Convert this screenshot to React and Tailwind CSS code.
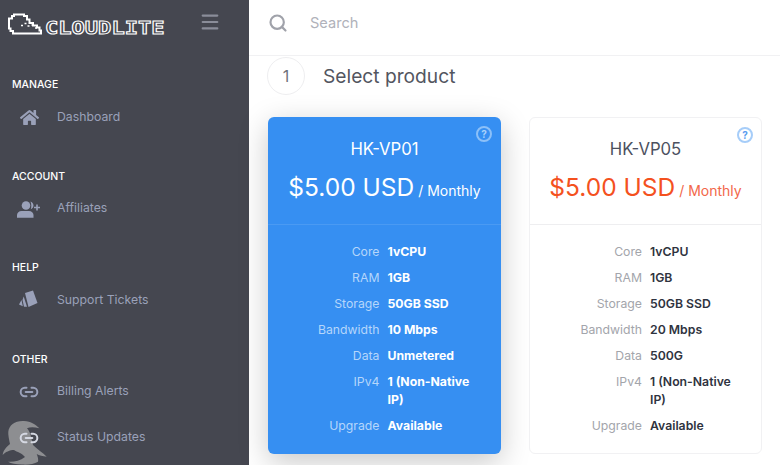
import React from "react";
import { Link2, Menu, Search } from "lucide-react";
import { FaHome } from "react-icons/fa";

const nav = [
  { title: "MANAGE", items: [{ label: "Dashboard", icon: "home" }] },
  { title: "ACCOUNT", items: [{ label: "Affiliates", icon: "users" }] },
  { title: "HELP", items: [{ label: "Support Tickets", icon: "tickets" }] },
  {
    title: "OTHER",
    items: [
      { label: "Billing Alerts", icon: "link" },
      { label: "Status Updates", icon: "link", light: true },
    ],
  },
];

const plans = [
  {
    name: "HK-VP01",
    active: true,
    specs: [
      ["Core", "1vCPU"],
      ["RAM", "1GB"],
      ["Storage", "50GB SSD"],
      ["Bandwidth", "10 Mbps"],
      ["Data", "Unmetered"],
      ["IPv4", "1 (Non-Native IP)"],
      ["Upgrade", "Available"],
    ],
  },
  {
    name: "HK-VP05",
    active: false,
    specs: [
      ["Core", "1vCPU"],
      ["RAM", "1GB"],
      ["Storage", "50GB SSD"],
      ["Bandwidth", "20 Mbps"],
      ["Data", "500G"],
      ["IPv4", "1 (Non-Native IP)"],
      ["Upgrade", "Available"],
    ],
  },
];

function NavIcon({ type }) {
  if (type === "home") return <FaHome className="w-[19px] h-[19px]" />;
  if (type === "link") return <Link2 className="w-5 h-5" strokeWidth={2.4} />;
  if (type === "users") {
    return (
      <svg viewBox="0 0 24 20" className="w-[24px] h-[20px] shrink-0 fill-current">
        <circle cx="9" cy="6.500" r="4.300" />
        <path d="M0 18.800V16C0 14 2 12 4.500 12H12C14.500 12 16.500 14 16.500 16V18.800Z" />
        <path d="M13.500 2.500C15.500 3.500 16.500 5 16.500 6.500C16.500 8 15.500 9.500 13.800 10.300C14.500 8 14.500 5 13.500 2.500Z" />
        <path d="M19.200 5.500H20.800V7.700H23V9.300H20.800V11.500H19.200V9.300H17V7.700H19.200Z" />
      </svg>
    );
  }
  return (
    <svg viewBox="0 0 20 20" className="w-5 h-5 fill-current">
      <path d="M6 3 14 .5 18.500 13 9.500 17Z" />
      <path d="M4.700 6.500 8 16.800 5 16.800 3.500 10Z" />
      <path d="M2.500 10 3.800 16.200 0 14.500Z" />
    </svg>
  );
}

function Sidebar() {
  return (
    <aside className="relative w-[249px] h-[465px] shrink-0 overflow-hidden bg-[#454750]">
      <svg viewBox="0 0 48 46" className="absolute left-0 top-[419px] w-[48px] h-[46px]">
        <path
          fill="#8d8e91"
          d="M8.300 12.700C9 6 15 1.500 24 2C31 2.500 36 5.500 39.300 9.300C34 8 30 8 27 9.300C30 12 31 18 33 26C37 30 43 34 46.700 37.700C43 37 39 36.500 36.700 35C38 38 38.500 41 38 42.700C34 45 28 46 22 45.500C16 45 11 44.500 8 42.700C14 43 20 42 25 38C22 34 17 33 14 31C10 31 5 33 2.700 36C3 32 6 28 10 25C9 20 8 16 8.300 12.700Z"
        />
      </svg>
      <div className="relative flex items-start h-[75px] pl-[7px] pr-[28.5px] pt-[13px]">
        <svg viewBox="0 0 35 24" className="w-[35px] h-[24px] shrink-0" fill="none" stroke="#fff" strokeWidth="2">
          <path d="M6 20.500H34V17.500H32.500V14.500H30V12.500H26V10H22.500V6.500H20V3H17V1.500H7V3H5V5.500H2V15.500H3.500V18H6Z" />
          <path d="M14 12.500h2M17.500 10.500h2M20.500 13h2M24.500 12h2M28 15h2" strokeWidth="1.500" />
        </svg>
        <span className="inline-block origin-left scale-x-[1.26] ml-[3px] mt-[7px] font-['DejaVu_Sans_Mono',monospace] font-bold text-[17.5px] leading-[16px] text-[#454750] [-webkit-text-stroke:1px_#ffffff]">
          CLOUDLITE
        </span>
        <Menu className="ml-auto w-[22px] h-[22px] mt-[-2px] text-[#8a8d99]" strokeWidth={2.3} />
      </div>
      <nav className="relative flex flex-col">
        {nav.map((section) => (
          <div key={section.title} className="mb-[26.5px]">
            <h6 className="pl-3 h-[20px] leading-[20px] text-[10.5px] font-medium text-white">{section.title}</h6>
            <ul className="mt-[-1px]">
              {section.items.map((item) => (
                <li key={item.label} className="flex items-center h-[46px] pl-[19px] text-[#9aa1b9]">
                  <span className={item.light ? "w-[20px] flex justify-center text-[#d5d8e2]" : "w-[20px] flex justify-center"}>
                    <NavIcon type={item.icon} />
                  </span>
                  <span className="ml-[18px] text-[12.25px]">{item.label}</span>
                </li>
              ))}
            </ul>
          </div>
        ))}
      </nav>
    </aside>
  );
}

function PlanCard({ plan }) {
  const { active } = plan;
  return (
    <div
      className={
        active
          ? "relative w-[233px] h-[337px] rounded-[6px] bg-[#368ff2] text-white shadow-[0_8px_30px_rgba(0,0,0,0.22)]"
          : "relative w-[233px] h-[337px] rounded-[6px] bg-white border border-[#f1f1f3] text-[#4c5160]"
      }
    >
      <span
        className={
          active
            ? "absolute top-[9px] right-[9px] w-[16px] h-[16px] rounded-full border-2 border-[#8cc0f8] text-[#a9d0fa] text-[10px] font-bold leading-[12px] text-center"
            : "absolute top-[9px] right-[8px] w-[16px] h-[16px] rounded-full border-2 border-[#a6cdf9] text-[#5a9df0] text-[10px] font-bold leading-[12px] text-center"
        }
      >
        ?
      </span>
      <div className={active ? "h-[108px] border-b border-[#4a9af3] pt-[21px] text-center" : "h-[107px] border-b border-[#eeeef0] pt-[20px] text-center"}>
        <p className="text-[16.7px] leading-[22px]">{plan.name}</p>
        <p className={active ? "mt-[10px] leading-[34px]" : "mt-[10px] leading-[34px] text-[#f4511e]"}>
          <span className="text-[24.5px]">$5.00 USD</span>
          <span className={active ? "ml-[4px] text-[14px]" : "ml-[4px] text-[14px] text-[#f2674a]"}>/ Monthly</span>
        </p>
      </div>
      <dl
        className={
          active
            ? "grid grid-cols-2 gap-x-2 gap-y-2 pl-[19px] pr-[21px] pt-[18px] text-[12.25px] leading-[18px]"
            : "grid grid-cols-2 gap-x-2 gap-y-2 pl-[20px] pr-[19px] pt-[18px] text-[12.25px] leading-[18px]"
        }
      >
        {plan.specs.map(([k, v]) => (
          <React.Fragment key={k}>
            <dt className={active ? "text-right text-[#b5d6fb]" : "text-right text-[#a3a5ab]"}>{k}</dt>
            <dd className={active ? "font-bold text-white" : "font-semibold text-[#2f3340]"}>{v}</dd>
          </React.Fragment>
        ))}
      </dl>
    </div>
  );
}

export default function App() {
  return (
    <div className="flex w-[780px] h-[465px] overflow-hidden bg-white font-['Inter',sans-serif]">
      <Sidebar />
      <main className="flex-1 min-w-0">
        <header className="flex items-center h-[56px] border-b border-[#f1f1f3] pl-[19px] pb-[10px]">
          <Search className="w-[20px] h-[20px] text-[#a0a2aa]" strokeWidth={2.6} />
          <span className="ml-[22px] text-[14.6px] leading-[20px] text-[#b0b2ba]">Search</span>
        </header>
        <div className="flex items-center pl-[18px] pt-[1px] h-[39px]">
          <span className="flex items-center justify-center w-[38px] h-[38px] rounded-full border border-[#eeeef0] text-[16px] text-[#6e717b]">1</span>
          <h2 className="ml-[18px] text-[19.2px] text-[#53565f]">Select product</h2>
        </div>
        <div className="flex gap-[28px] pl-[19px] pt-[22px]">
          {plans.map((plan) => (
            <PlanCard key={plan.name} plan={plan} />
          ))}
        </div>
      </main>
    </div>
  );
}
